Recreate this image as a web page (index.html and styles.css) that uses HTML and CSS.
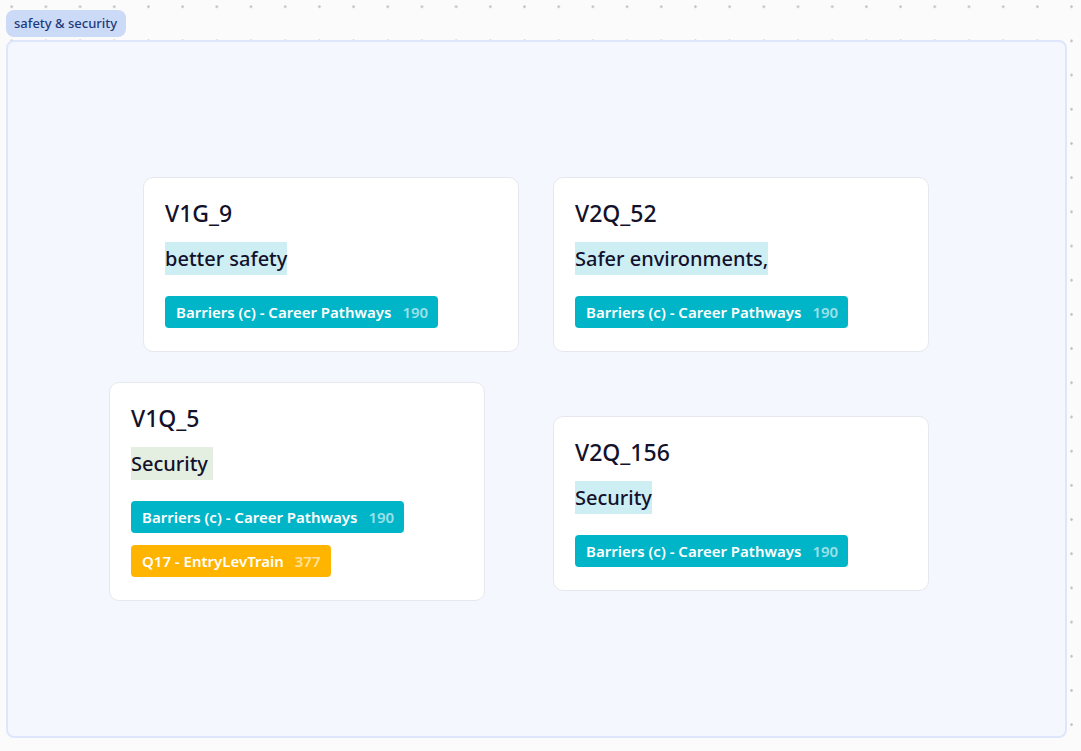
FILE: index.html
```html
<!DOCTYPE html>
<html>
<head>
<meta charset="utf-8">
<link rel="stylesheet" href="styles.css">
</head>
<body>
<div class="canvas">
  <div class="group-label">safety &amp; security</div>
  <div class="group">
    <div class="card card-a">
      <div class="card-title">V1G_9</div>
      <div class="card-text"><span class="hl hl-cyan">better safety</span></div>
      <div class="tags">
        <span class="tag tag-cyan">Barriers (c) - Career Pathways<span class="count">190</span></span>
      </div>
    </div>
    <div class="card card-b">
      <div class="card-title">V2Q_52</div>
      <div class="card-text"><span class="hl hl-cyan">Safer environments,</span></div>
      <div class="tags">
        <span class="tag tag-cyan">Barriers (c) - Career Pathways<span class="count">190</span></span>
      </div>
    </div>
    <div class="card card-c">
      <div class="card-title">V1Q_5</div>
      <div class="card-text"><span class="hl hl-green">Security&nbsp;</span></div>
      <div class="tags">
        <span class="tag tag-cyan">Barriers (c) - Career Pathways<span class="count">190</span></span>
        <span class="tag tag-amber">Q17 - EntryLevTrain<span class="count">377</span></span>
      </div>
    </div>
    <div class="card card-d">
      <div class="card-title">V2Q_156</div>
      <div class="card-text"><span class="hl hl-cyan">Security</span></div>
      <div class="tags">
        <span class="tag tag-cyan">Barriers (c) - Career Pathways<span class="count">190</span></span>
      </div>
    </div>
  </div>
</div>
</body>
</html>
```

FILE: styles.css
```css
* { box-sizing: border-box; }
html, body {
  margin: 0;
  padding: 0;
  width: 1081px;
  height: 751px;
  overflow: hidden;
}
body {
  font-family: "Noto Sans", "Open Sans", "Liberation Sans", sans-serif;
  background-color: #fbfbfc;
  background-image: radial-gradient(circle, #c4c4c8 1.1px, transparent 1.5px);
  background-size: 34.2px 34.2px;
  background-position: -5.4px -10.4px;
}
.canvas {
  position: relative;
  width: 1081px;
  height: 751px;
}
.group-label {
  position: absolute;
  left: 6px;
  top: 10px;
  height: 27px;
  padding: 0 9px 0 8px;
  line-height: 27px;
  font-size: 13px;
  font-weight: 500;
  color: #1e3a7b;
  background: #cbdaf7;
  border-radius: 8px;
}
.group {
  position: absolute;
  left: 6px;
  top: 40px;
  width: 1061px;
  height: 698px;
  background: #f4f7fe;
  border: 2px solid #dde6fb;
  border-radius: 8px;
}
.card {
  position: absolute;
  width: 376px;
  background: #ffffff;
  border: 1px solid #e6e8ee;
  border-radius: 10px;
  padding: 18px 21px 22px;
  display: flex;
  flex-direction: column;
}
.card-a { left: 135px; top: 135px; height: 175px; }
.card-b { left: 545px; top: 135px; height: 175px; }
.card-c { left: 101px; top: 340px; height: 219px; }
.card-d { left: 545px; top: 374px; height: 175px; }
.card-title {
  font-size: 23px;
  font-weight: 500;
  line-height: 34px;
  color: #13112b;
}
.card-text {
  margin-top: 12px;
  font-size: 20px;
  font-weight: 500;
  line-height: 33px;
  color: #13112b;
}
.hl { display: inline-block; }
.hl-cyan { background: #cdeff4; }
.hl-green { background: #e4efe1; }
.tags {
  margin-top: 21px;
  display: flex;
  flex-direction: column;
  align-items: flex-start;
  gap: 12px;
}
.tag {
  display: inline-flex;
  align-items: center;
  height: 32px;
  padding: 0 10px 0 11px;
  border-radius: 4px;
  font-size: 15px;
  font-weight: 600;
  color: #ffffff;
}
.tag-cyan { background: #00b5c8; }
.tag-amber { background: #ffb400; }
.count {
  margin-left: 11px;
  opacity: 0.6;
}
```
